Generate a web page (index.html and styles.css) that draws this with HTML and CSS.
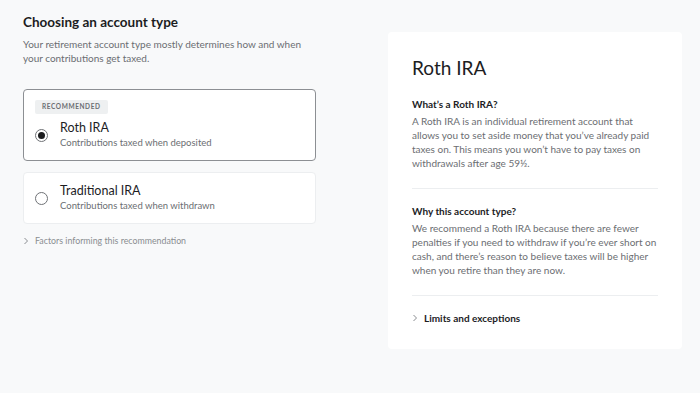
FILE: index.html
```html
<!DOCTYPE html>
<html lang="en">
<head>
    <meta charset="UTF-8">
    <meta name="viewport" content="width=device-width, initial-scale=1.0">
    <title>Choosing an account type</title>
    <link rel="stylesheet" href="styles.css">
</head>
<body>
    <div class="page">
        <div class="chooser">
            <h1 class="chooser-title">Choosing an account type</h1>
            <p class="chooser-intro">Your retirement account type mostly determines how and when your contributions get taxed.</p>

            <div class="option option-selected">
                <span class="badge">Recommended</span>
                <div class="option-row">
                    <span class="radio radio-on"></span>
                    <div>
                        <div class="option-name">Roth IRA</div>
                        <div class="option-note">Contributions taxed when deposited</div>
                    </div>
                </div>
            </div>

            <div class="option">
                <div class="option-row">
                    <span class="radio"></span>
                    <div>
                        <div class="option-name">Traditional IRA</div>
                        <div class="option-note">Contributions taxed when withdrawn</div>
                    </div>
                </div>
            </div>

            <div class="factors">
                <svg class="chevron" width="6" height="8" viewBox="0 0 6 8"><path d="M1.5 1l3 3-3 3" fill="none" stroke="currentColor" stroke-width="1"/></svg>
                Factors informing this recommendation
            </div>
        </div>

        <div class="detail">
            <h2 class="detail-title">Roth IRA</h2>

            <div class="section">
                <h3 class="section-title">What’s a Roth IRA?</h3>
                <p class="section-text">A Roth IRA is an individual retirement account that allows you to set aside money that you’ve already paid taxes on. This means you won’t have to pay taxes on withdrawals after age 59½.</p>
            </div>

            <div class="section">
                <h3 class="section-title">Why this account type?</h3>
                <p class="section-text">We recommend a Roth IRA because there are fewer penalties if you need to withdraw if you’re ever short on cash, and there’s reason to believe taxes will be higher when you retire than they are now.</p>
            </div>

            <div class="limits">
                <svg class="chevron" width="6" height="8" viewBox="0 0 6 8"><path d="M1.5 1l3 3-3 3" fill="none" stroke="currentColor" stroke-width="1"/></svg>
                Limits and exceptions
            </div>
        </div>
    </div>
</body>
</html>
```

FILE: styles.css
```css
* {
    margin: 0;
    padding: 0;
    box-sizing: border-box;
}

body {
    font-family: 'Lato', 'Noto Sans', sans-serif;
    background: #f8f9fa;
    color: #1c1d1f;
    min-height: 100vh;
}

.page {
    display: flex;
    align-items: flex-start;
    gap: 72px;
    padding: 12px 18px 0 23px;
}

/* Left column */
.chooser {
    width: 293px;
}

.chooser-title {
    font-size: 13.5px;
    font-weight: 700;
    line-height: 20px;
}

.chooser-intro {
    margin-top: 5px;
    font-size: 10px;
    line-height: 14px;
    color: #6b6e72;
    padding-right: 10px;
}

.option {
    background: #fff;
    border: 1px solid #eceef0;
    border-radius: 4px;
    padding: 10px 11px;
    margin-top: 12px;
}

.option-selected {
    margin-top: 24px;
    padding-bottom: 10px;
    border-color: #8c8f93;
}

.option-selected + .option {
    margin-top: 11px;
}

.badge {
    display: block;
    width: max-content;
    background: #eef0f1;
    color: #6b6e72;
    font-size: 6.5px;
    font-weight: 700;
    letter-spacing: 0.6px;
    text-transform: uppercase;
    line-height: 14px;
    padding: 0 7px;
    border-radius: 2px;
    margin-bottom: 6px;
}

.option-row {
    display: flex;
    align-items: center;
    gap: 12px;
}

.radio {
    width: 13px;
    height: 13px;
    border: 1px solid #6f7276;
    border-radius: 50%;
    flex-shrink: 0;
    display: flex;
    align-items: center;
    justify-content: center;
}

.radio-on::after {
    content: '';
    width: 7px;
    height: 7px;
    border-radius: 50%;
    background: #1c1d1f;
}

.option-name {
    font-size: 12.5px;
    line-height: 16px;
}

.option-note {
    font-size: 9.5px;
    line-height: 14px;
    color: #6b6e72;
}

.factors {
    display: flex;
    align-items: center;
    gap: 6px;
    margin-top: 10px;
    font-size: 8.8px;
    color: #8a8d91;
    line-height: 14px;
}

.chevron {
    flex-shrink: 0;
}

/* Right panel */
.detail {
    width: 294px;
    margin-top: 20px;
    background: #fff;
    border-radius: 4px;
    padding: 22px 24px 24px;
}

.detail-title {
    font-size: 19px;
    font-weight: 400;
    line-height: 28px;
}

.section {
    padding: 14px 0 18px;
    border-bottom: 1px solid #eceef0;
}

.section + .section {
    padding-top: 14px;
}

.section-title {
    font-size: 10px;
    font-weight: 700;
    line-height: 16px;
    margin-bottom: 2px;
}

.section-text {
    font-size: 10px;
    line-height: 14px;
    color: #6b6e72;
}

.limits {
    display: flex;
    align-items: center;
    gap: 6px;
    padding-top: 15px;
    font-size: 10px;
    font-weight: 700;
    line-height: 14px;
}

.limits .chevron {
    color: #8a8d91;
}
```
